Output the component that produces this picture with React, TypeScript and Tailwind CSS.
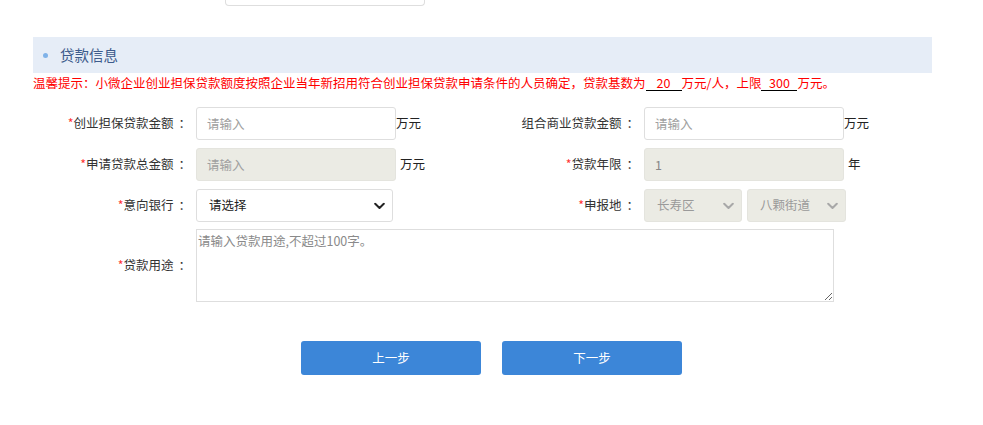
import { ReactNode } from "react";

const font = { fontFamily: '"Noto Sans CJK SC", "Noto Sans", sans-serif' };

function Chevron({ color }: { color: string }) {
  return (
    <svg width="11" height="7" viewBox="0 0 11 7" className="pointer-events-none absolute right-[7px] top-1/2 -translate-y-1/2">
      <path d="M1.2 1.2 L5.5 5.5 L9.8 1.2" fill="none" stroke={color} strokeWidth="2" strokeLinecap="round" strokeLinejoin="round" />
    </svg>
  );
}

function Label({ text, required, className = "" }: { text: string; required?: boolean; className?: string }) {
  return (
    <div className={`shrink-0 whitespace-nowrap text-right pr-[5px] text-[#333] ${className}`}>
      {required && <span className="text-[#ff3333]">*</span>}
      {text}
      <span className="pl-[5px]">：</span>
    </div>
  );
}

function TextInput({ placeholder, value, disabled }: { placeholder?: string; value?: string; disabled?: boolean }) {
  return (
    <input
      readOnly
      placeholder={placeholder}
      defaultValue={value}
      className={`w-[200px] h-[33px] rounded-[3px] border px-[10px] text-[12.5px] outline-none placeholder:text-[#a0a0a0] ${
        disabled ? "bg-[#ebebe4] border-[#e4e4de] text-[#888]" : "bg-white border-[#dedede] text-[#333]"
      }`}
    />
  );
}

function Select({ text, width, disabled }: { text: string; width: string; disabled?: boolean }) {
  return (
    <div
      className={`relative h-[33px] rounded-[3px] border flex items-center pl-[12px] ${width} ${
        disabled ? "bg-[#ebebe4] border-[#e4e4de] text-[#9a9a9a]" : "bg-white border-[#dedede] text-[#222]"
      }`}
    >
      {text}
      <Chevron color={disabled ? "#a8a8a8" : "#222"} />
    </div>
  );
}

function Row({ children }: { children: ReactNode }) {
  return <div className="flex items-center">{children}</div>;
}

function Blank({ v }: { v: string }) {
  return <span className="inline-block w-[36px] border-b border-black text-center leading-[15px]">{v}</span>;
}

export default function App() {
  return (
    <div className="w-[983px] h-[425px] bg-white overflow-hidden text-[12.5px]" style={font}>
      <div className="ml-[225px] w-[200px] h-[6px] border border-t-0 border-[#dedede] rounded-b-[4px]" />

      <div className="ml-[33px] w-[899px]">
        <div className="mt-[31px] h-[36px] bg-[#e6edf7] flex items-center pl-[10px]">
          <span className="w-[5px] h-[5px] rounded-full bg-[#7fb2e8]" />
          <span className="ml-[12px] text-[14.5px] text-[#3d5b8c]">贷款信息</span>
        </div>

        <p className="mt-[1px] h-[17px] text-[#ff0000] whitespace-nowrap leading-[17px]">
          温馨提示：小微企业创业担保贷款额度按照企业当年新招用符合创业担保贷款申请条件的人员确定，贷款基数为<Blank v="20" />万元/人，上限<Blank v="300" />万元。
        </p>

        <div className="mt-[16px] flex flex-col gap-[8px]">
          <Row>
            <Label text="创业担保贷款金额" required className="w-[163px]" />
            <TextInput placeholder="请输入" />
            <span className="w-[110px] text-[#222]">万元</span>
            <Label text="组合商业贷款金额" className="w-[138px]" />
            <TextInput placeholder="请输入" />
            <span className="text-[#222]">万元</span>
          </Row>
          <Row>
            <Label text="申请贷款总金额" required className="w-[163px]" />
            <TextInput placeholder="请输入" disabled />
            <span className="w-[110px] pl-[4px] text-[#222]">万元</span>
            <Label text="贷款年限" required className="w-[138px]" />
            <TextInput value="1" disabled />
            <span className="pl-[4px] text-[#222]">年</span>
          </Row>
          <Row>
            <Label text="意向银行" required className="w-[163px]" />
            <Select text="请选择" width="w-[197px]" />
            <span className="w-[113px]" />
            <Label text="申报地" required className="w-[138px]" />
            <div className="flex gap-[5px]">
              <Select text="长寿区" width="w-[98px]" disabled />
              <Select text="八颗街道" width="w-[99px]" disabled />
            </div>
          </Row>
          <div className="-mt-[1px]">
            <Row>
              <Label text="贷款用途" required className="w-[163px]" />
              <textarea
                readOnly
                placeholder="请输入贷款用途,不超过100字。"
                className="w-[638px] h-[73px] border border-[#dedede] px-[1px] py-[2px] text-[12.5px] outline-none placeholder:text-[#8a8a8a]"
              />
            </Row>
          </div>
        </div>
      </div>

      <div className="mt-[39px] flex justify-center gap-[21px]">
        <button className="w-[180px] h-[34px] rounded-[3px] bg-[#3c86d8] text-white text-[12.5px]">上一步</button>
        <button className="w-[180px] h-[34px] rounded-[3px] bg-[#3c86d8] text-white text-[12.5px]">下一步</button>
      </div>
    </div>
  );
}
